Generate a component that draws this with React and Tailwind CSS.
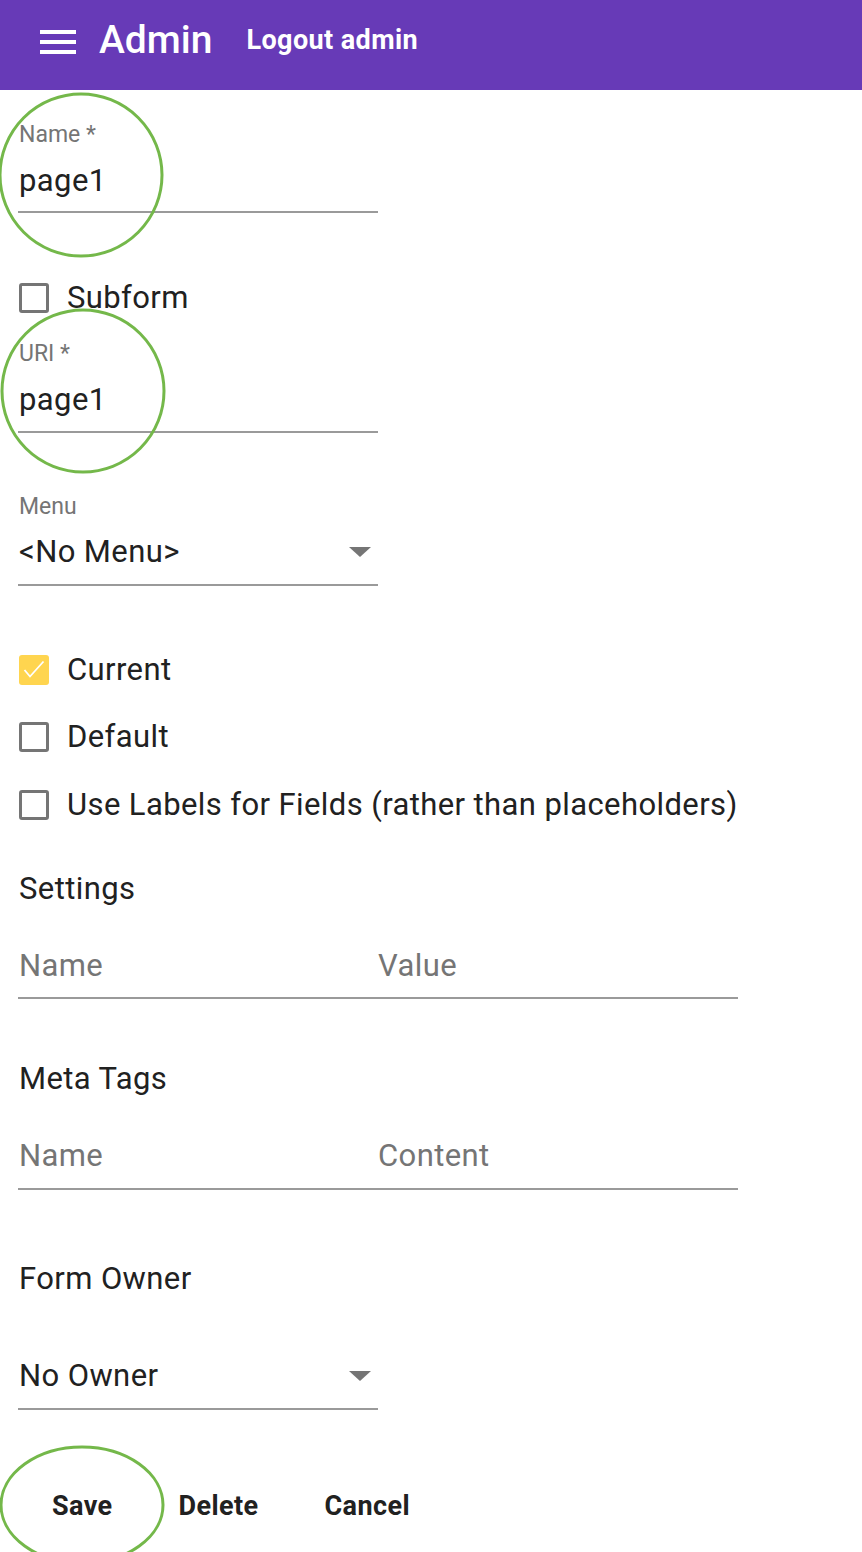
import React from 'react'

const font = { fontFamily: 'Roboto, "Liberation Sans", sans-serif' }

function Checkbox({ checked, label, className = '' }) {
  return (
    <div className={`flex items-center h-[30px] ${className}`}>
      {checked ? (
        <div className="w-[30px] h-[30px] rounded-[3px] bg-[#ffd54f] flex items-center justify-center">
          <svg width="24" height="24" viewBox="0 0 24 24" fill="none">
            <path d="M2.5 12l5.5 6.5L21.5 3.5" stroke="#ffffff" strokeWidth="1.8" />
          </svg>
        </div>
      ) : (
        <div className="w-[30px] h-[30px] rounded-[3px] border-[3px] border-[#757575]" />
      )}
      <span className="ml-[18px] text-[31px] leading-[36px] tracking-[0.4px] text-[#212121]">{label}</span>
    </div>
  )
}

function Caret() {
  return (
    <svg width="22" height="10" viewBox="0 0 22 10" className="mr-[7px]">
      <path d="M0 0h22L11 10z" fill="#757575" />
    </svg>
  )
}

function Ring({ cx, cy, rx, ry }) {
  return (
    <ellipse cx={cx} cy={cy} rx={rx} ry={ry} fill="none" stroke="#74b84a" strokeWidth="3" />
  )
}

export default function App() {
  return (
    <div className="relative w-full h-[1552px] overflow-hidden bg-white" style={font}>
      {/* Top bar */}
      <header className="h-[90px] bg-[#673ab7] flex items-center pb-[10px] text-white">
        <svg width="36" height="24" viewBox="0 0 36 24" className="ml-[40px] mt-[4px]">
          <rect x="0" y="0" width="36" height="4" fill="#fff" />
          <rect x="0" y="10" width="36" height="4" fill="#fff" />
          <rect x="0" y="20" width="36" height="4" fill="#fff" />
        </svg>
        <span className="ml-[23px] text-[39px] leading-[44px] font-medium">Admin</span>
        <span className="ml-[34px] text-[27px] leading-[32px] tracking-[0.4px] font-bold">Logout admin</span>
      </header>

      <main className="px-[18px] flex flex-col">
        {/* Name */}
        <div className="w-[360px] mt-[33px]">
          <div className="text-[23px] leading-[24px] text-[#757575] pl-px">Name *</div>
          <div className="mt-[16px] pb-[12px] border-b-2 border-[#9a9a9a] text-[31px] leading-[36px] tracking-[0.4px] text-[#212121] pl-px">
            page1
          </div>
        </div>

        <Checkbox label="Subform" className="mt-[70px] pl-px" />

        {/* URI */}
        <div className="w-[360px] mt-[29px]">
          <div className="text-[23px] leading-[24px] text-[#757575] pl-px">URI *</div>
          <div className="mt-[16px] pb-[13px] border-b-2 border-[#9a9a9a] text-[31px] leading-[36px] tracking-[0.4px] text-[#212121] pl-px">
            page1
          </div>
        </div>

        {/* Menu */}
        <div className="w-[360px] mt-[62px]">
          <div className="text-[23px] leading-[24px] text-[#757575] pl-px">Menu</div>
          <div className="mt-[15px] pb-[14px] border-b-2 border-[#9a9a9a] flex items-center justify-between text-[31px] leading-[36px] tracking-[0.4px] text-[#212121] pl-px">
            <span>&lt;No Menu&gt;</span>
            <Caret />
          </div>
        </div>

        <Checkbox checked label="Current" className="mt-[69px] pl-px" />
        <Checkbox label="Default" className="mt-[37px] pl-px" />
        <Checkbox label="Use Labels for Fields (rather than placeholders)" className="mt-[38px] pl-px" />

        {/* Settings */}
        <div className="mt-[51px] text-[31px] leading-[36px] tracking-[0.4px] text-[#212121] pl-px">Settings</div>
        <div className="w-[720px] mt-[41px] pb-[13px] border-b-2 border-[#9a9a9a] grid grid-cols-2 text-[31px] leading-[36px] tracking-[0.4px] text-[#757575]">
          <span className="pl-px">Name</span>
          <span>Value</span>
        </div>

        {/* Meta tags */}
        <div className="mt-[62px] text-[31px] leading-[36px] tracking-[0.4px] text-[#212121] pl-px">Meta Tags</div>
        <div className="w-[720px] mt-[41px] pb-[14px] border-b-2 border-[#9a9a9a] grid grid-cols-2 text-[31px] leading-[36px] tracking-[0.4px] text-[#757575]">
          <span className="pl-px">Name</span>
          <span>Content</span>
        </div>

        {/* Form owner */}
        <div className="mt-[71px] text-[31px] leading-[36px] tracking-[0.4px] text-[#212121] pl-px">Form Owner</div>
        <div className="w-[360px] mt-[61px] pb-[14px] border-b-2 border-[#9a9a9a] flex items-center justify-between text-[31px] leading-[36px] tracking-[0.4px] text-[#212121] pl-px">
          <span>No Owner</span>
          <Caret />
        </div>

        {/* Actions */}
        <div className="mt-[78px] flex pl-px text-[27px] leading-[36px] tracking-[0.4px] font-bold text-[#212121]">
          <button className="px-[33px]">Save</button>
          <button className="px-[33px]">Delete</button>
          <button className="px-[33px]">Cancel</button>
        </div>
      </main>

      {/* Annotation rings */}
      <svg className="absolute inset-0 pointer-events-none" width="862" height="1552">
        <Ring cx={81} cy={175} rx={81} ry={81} />
        <Ring cx={83} cy={391} rx={81} ry={81} />
        <Ring cx={82} cy={1505} rx={81} ry={58} />
      </svg>
    </div>
  )
}
